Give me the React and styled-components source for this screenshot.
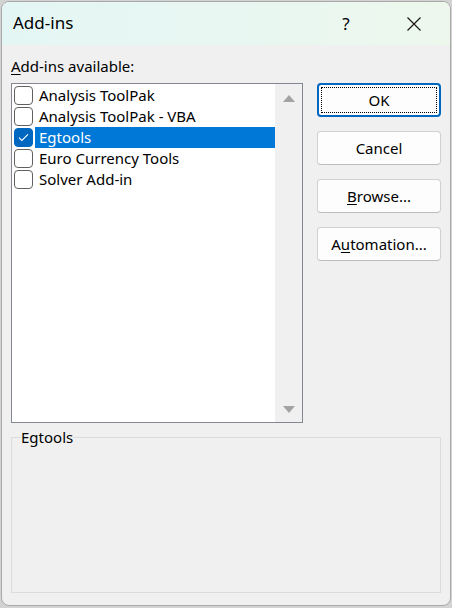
import styled, { createGlobalStyle } from "styled-components";

const GlobalStyle = createGlobalStyle`
  html, body {
    margin: 0;
    padding: 0;
    background: #d3d3d3;
  }
  body {
    font-family: "Segoe UI", "Noto Sans", "Liberation Sans", sans-serif;
    color: #000;
  }
`;

const Page = styled.div`
  width: 452px;
  height: 608px;
  padding: 1px 1px 0 1px;
  box-sizing: border-box;
`;

const Window = styled.div`
  width: 450px;
  height: 605px;
  box-sizing: border-box;
  border: 1px solid #a9a9a9;
  border-radius: 8px;
  overflow: hidden;
  background: #f0f0f0;
  display: flex;
  flex-direction: column;
`;

const TitleBar = styled.div`
  height: 43px;
  flex: none;
  display: flex;
  align-items: center;
  padding-left: 11px;
  background: linear-gradient(90deg, #e4f6f4 0%, #e9f7f1 60%, #edf7ec 100%);
`;

const Title = styled.div`
  flex: 1;
  font-size: 17px;
  padding-bottom: 2px;
`;

const TitleButton = styled.div`
  width: ${(p) => p.$w}px;
  height: 43px;
  display: flex;
  align-items: center;
  justify-content: center;
  font-size: 17px;
`;

const Body = styled.div`
  flex: 1;
  display: flex;
  flex-direction: column;
  padding: 12px 9px 10px 9px;
`;

const Columns = styled.div`
  display: flex;
  gap: 14px;
`;

const LeftCol = styled.div`
  width: 292px;
  display: flex;
  flex-direction: column;
`;

const Label = styled.div`
  font-size: 15px;
  line-height: 19px;
  margin-bottom: 7px;
`;

const Accel = styled.span`
  text-decoration: underline;
  text-underline-offset: 2px;
`;

const ListBox = styled.div`
  height: 340px;
  box-sizing: border-box;
  border: 1px solid #828790;
  background: #fff;
  display: flex;
`;

const Items = styled.div`
  flex: 1;
  padding: 1px 0 0 2px;
`;

const Item = styled.div`
  height: 21px;
  display: flex;
  align-items: center;
  font-size: 15px;
`;

const Box = styled.div`
  width: 19px;
  height: 19px;
  flex: none;
  box-sizing: border-box;
  border: 1px solid ${(p) => (p.$checked ? "#0067c0" : "#616161")};
  border-radius: 4px;
  background: ${(p) => (p.$checked ? "#0067c0" : "#fff")};
  display: flex;
  align-items: center;
  justify-content: center;
  margin-right: 2px;
`;

const ItemText = styled.div`
  flex: 1;
  height: 21px;
  line-height: 20px;
  padding-left: 4px;
  background: ${(p) => (p.$selected ? "#0078d7" : "transparent")};
  color: ${(p) => (p.$selected ? "#fff" : "#000")};
`;

const ScrollBar = styled.div`
  width: 27px;
  flex: none;
  background: #f0f0f0;
  display: flex;
  flex-direction: column;
  justify-content: space-between;
  align-items: center;
  padding: 11px 0 9px;
`;

const Arrow = styled.div`
  width: 0;
  height: 0;
  border-left: 6px solid transparent;
  border-right: 6px solid transparent;
  ${(p) =>
    p.$down
      ? "border-top: 7px solid #a3a3a3;"
      : "border-bottom: 7px solid #a3a3a3;"}
`;

const RightCol = styled.div`
  width: 124px;
  display: flex;
  flex-direction: column;
  gap: 14px;
  padding-top: 26px;
`;

const Button = styled.div`
  height: 34px;
  box-sizing: border-box;
  border: ${(p) => (p.$default ? "2px solid #0067c0" : "1px solid #d0d0d0")};
  border-bottom-color: ${(p) => (p.$default ? "#0067c0" : "#bcbcbc")};
  border-radius: 4px;
  background: #fdfdfd;
  display: flex;
  align-items: center;
  justify-content: center;
  font-size: 15px;
  padding: ${(p) => (p.$default ? "2px" : "0")};
`;

const Focus = styled.div`
  width: 100%;
  height: 100%;
  box-sizing: border-box;
  border: 1px dotted #000;
  display: flex;
  align-items: center;
  justify-content: center;
`;

const Group = styled.fieldset`
  margin: 5px 0 0 0;
  padding: 0;
  height: 165px;
  box-sizing: border-box;
  border: 1px solid #dcdcdc;
  border-radius: 0;
`;

const Legend = styled.legend`
  font-size: 15px;
  padding: 0;
  margin-left: 9px;
  line-height: 19px;
`;

const addins = [
  { name: "Analysis ToolPak" },
  { name: "Analysis ToolPak - VBA" },
  { name: "Egtools", checked: true, selected: true },
  { name: "Euro Currency Tools" },
  { name: "Solver Add-in" },
];

const Check = () => (
  <svg width="11" height="9" viewBox="0 0 11 9">
    <path d="M1 4.6 L3.9 7.4 L10 1.3" fill="none" stroke="#fff" strokeWidth="1.1" />
  </svg>
);

const Close = () => (
  <svg width="16" height="16" viewBox="0 0 16 16">
    <path d="M1.5 1.5 L14.5 14.5 M14.5 1.5 L1.5 14.5" stroke="#1a1a1a" strokeWidth="1.2" />
  </svg>
);

export default function App() {
  return (
    <>
      <GlobalStyle />
      <Page>
        <Window>
          <TitleBar>
            <Title>Add-ins</Title>
            <TitleButton $w={46}>?</TitleButton>
            <TitleButton $w={23} />
            <TitleButton $w={44}>
              <Close />
            </TitleButton>
            <TitleButton $w={14} />
          </TitleBar>
          <Body>
            <Columns>
              <LeftCol>
                <Label>
                  <Accel>A</Accel>dd-ins available:
                </Label>
                <ListBox>
                  <Items>
                    {addins.map((a) => (
                      <Item key={a.name}>
                        <Box $checked={a.checked}>{a.checked && <Check />}</Box>
                        <ItemText $selected={a.selected}>{a.name}</ItemText>
                      </Item>
                    ))}
                  </Items>
                  <ScrollBar>
                    <Arrow />
                    <Arrow $down />
                  </ScrollBar>
                </ListBox>
              </LeftCol>
              <RightCol>
                <Button $default>
                  <Focus>OK</Focus>
                </Button>
                <Button>Cancel</Button>
                <Button>
                  <span>
                    <Accel>B</Accel>rowse...
                  </span>
                </Button>
                <Button>
                  <span>
                    A<Accel>u</Accel>tomation...
                  </span>
                </Button>
              </RightCol>
            </Columns>
            <Group>
              <Legend>Egtools</Legend>
            </Group>
          </Body>
        </Window>
      </Page>
    </>
  );
}
